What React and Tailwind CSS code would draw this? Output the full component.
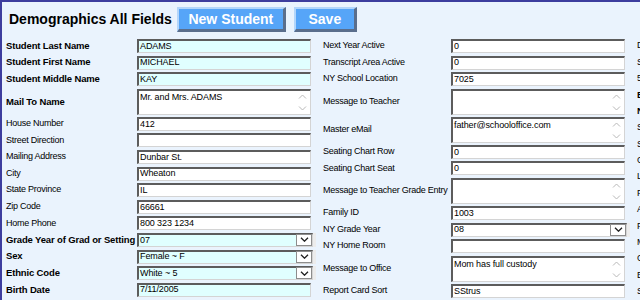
import React from "react";

// Campos do formulário, coluna por coluna
const LEFT = [
  { label: "Student Last Name", value: "ADAMS", bold: true, req: true },
  { label: "Student First Name", value: "MICHAEL", bold: true, req: true },
  { label: "Student Middle Name", value: "KAY", bold: true, req: true },
  { label: "Mail To Name", value: "Mr. and Mrs. ADAMS", bold: true, kind: "area" },
  { label: "House Number", value: "412" },
  { label: "Street Direction", value: "" },
  { label: "Mailing Address", value: "Dunbar St." },
  { label: "City", value: "Wheaton" },
  { label: "State Province", value: "IL" },
  { label: "Zip Code", value: "66661" },
  { label: "Home Phone", value: "800 323 1234" },
  { label: "Grade Year of Grad or Setting", value: "07", bold: true, req: true, kind: "select" },
  { label: "Sex", value: "Female ~ F", bold: true, req: true, kind: "select" },
  { label: "Ethnic Code", value: "White ~ 5", bold: true, req: true, kind: "select" },
  { label: "Birth Date", value: "7/11/2005", bold: true, req: true },
];

const MIDDLE = [
  { label: "Next Year Active", value: "0" },
  { label: "Transcript Area Active", value: "0" },
  { label: "NY School Location", value: "7025" },
  { label: "Message to Teacher", value: "", kind: "area" },
  { label: "Master eMail", value: "father@schooloffice.com", kind: "area" },
  { label: "Seating Chart Row", value: "0" },
  { label: "Seating Chart Seat", value: "0" },
  { label: "Message to Teacher Grade Entry", value: "", kind: "area" },
  { label: "Family ID", value: "1003" },
  { label: "NY Grade Year", value: "08", kind: "select" },
  { label: "NY Home Room", value: "" },
  { label: "Message to Office", value: "Mom has full custody", kind: "area" },
  { label: "Report Card Sort", value: "SStrus" },
  { label: "Locker Number", value: "" },
];

const RIGHT = [
  { label: "Date Entered" },
  { label: "School Entry Date" },
  { label: "504 Plan" },
  { label: "Emergency Contact", bold: true },
  { label: "Nickname", bold: true },
  { label: "Student ID" },
  { label: "SSN" },
  { label: "Counselor" },
  { label: "Language" },
  { label: "Father Name" },
  { label: "Advisor" },
  { label: "Father Phone" },
  { label: "Mother Name" },
  { label: "Cell Phone" },
  { label: "Email" },
  { label: "State ID" },
];

const inset =
  "border-t-2 border-l-2 border-r border-b border-t-[#5c5c5c] border-l-[#5c5c5c] border-r-[#d4d4d4] border-b-[#d4d4d4]";

const ScrollArrows = () => (
  <div className="absolute right-[3px] top-[3px] flex flex-col gap-[7px]">
    <svg width="9" height="5" viewBox="0 0 9 5">
      <path d="M1 4.5 L4.5 1 L8 4.5" fill="none" stroke="#b8b8b8" strokeWidth="1" />
    </svg>
    <svg width="9" height="5" viewBox="0 0 9 5">
      <path d="M1 0.5 L4.5 4 L8 0.5" fill="none" stroke="#b8b8b8" strokeWidth="1" />
    </svg>
  </div>
);

const Box = ({ field }) => {
  const bg = field.req ? "bg-[#e0ffff]" : "bg-white";

  if (field.kind === "area") {
    return (
      <div className={`relative h-[26px] w-[174px] shrink-0 ${inset} ${bg}`}>
        <div className="pl-[1px] pt-[1px] text-[9px] leading-[11px] tracking-[-0.1px]">{field.value}</div>
        <ScrollArrows />
      </div>
    );
  }

  if (field.kind === "select") {
    // o select passa um pouco da largura dos outros campos
    return (
      <div className="-mr-[5px] flex h-[14px] w-[179px] shrink-0 bg-[#ececec]">
        <div className={`relative flex h-[14px] w-[176px] items-center ${inset} ${bg}`}>
          <span className="pl-[1px] text-[9px] tracking-[-0.1px]">{field.value}</span>
          <div className="absolute right-0 top-[-1px] flex h-[12px] w-[16px] items-center justify-center border border-[#8d8d8d] bg-white">
            <svg width="9" height="5" viewBox="0 0 9 5">
              <path d="M1 0.8 L4.5 4.2 L8 0.8" fill="none" stroke="#1e1e1e" strokeWidth="1.3" />
            </svg>
          </div>
        </div>
      </div>
    );
  }

  return (
    <div className={`flex h-[14px] w-[174px] shrink-0 items-center ${inset} ${bg}`}>
      <span className="pl-[1px] text-[9px] tracking-[-0.1px]">{field.value}</span>
    </div>
  );
};

const Label = ({ field, width, tall }) => (
  <div
    className={`flex shrink-0 items-center whitespace-nowrap ${tall ? "h-[26px]" : "h-[14px]"} ${
      field.bold ? "text-[9.5px] font-bold tracking-[-0.15px]" : "text-[9px] tracking-[-0.25px]"
    }`}
    style={{ width }}
  >
    {field.label}
  </div>
);

const Column = ({ fields, labelWidth, className }) => (
  <div className={`flex shrink-0 flex-col ${className}`}>
    {fields.map((f) => (
      <div key={f.label} className={`flex items-start ${f.kind === "area" ? "h-[28px]" : "h-[16.6px]"}`}>
        <Label field={f} width={labelWidth} tall={f.kind === "area"} />
        <Box field={f} />
      </div>
    ))}
  </div>
);

const Btn = ({ children, w }) => (
  <button
    className={`flex h-[25px] ${w} items-center justify-center border-t-2 border-l-2 border-r-[3px] border-b-[3px] border-t-[#b3d6fb] border-l-[#b3d6fb] border-r-[#5a6e8c] border-b-[#5a6e8c] bg-[#56a5f8] text-[14px] font-bold text-white`}
  >
    {children}
  </button>
);

export default function App() {
  return (
    <div className="h-[300px] w-[640px] overflow-hidden border-t-2 border-l-2 border-[#3d3d9e] bg-[#eaf3fd] font-['Liberation_Sans',Arial,sans-serif] text-black">
      {/* Cabeçalho */}
      <div className="flex items-center pl-[7px] pt-[5px]">
        <h1 className="text-[14px] font-bold">Demographics All Fields</h1>
        <div className="ml-[5px] flex gap-[8px]">
          <Btn w="w-[109px]">New Student</Btn>
          <Btn w="w-[63px]">Save</Btn>
        </div>
      </div>

      {/* Formulário */}
      <div className="mt-[7px] flex pl-[4px]">
        <Column fields={LEFT} labelWidth={131} className="w-[305px]" />
        <Column fields={MIDDLE} labelWidth={128} className="ml-[12px] w-[302px]" />
        <div className="ml-[12px] flex flex-col">
          {RIGHT.map((f) => (
            <div key={f.label} className="h-[16.4px]">
              <Label field={f} width={120} />
            </div>
          ))}
        </div>
      </div>
    </div>
  );
}
